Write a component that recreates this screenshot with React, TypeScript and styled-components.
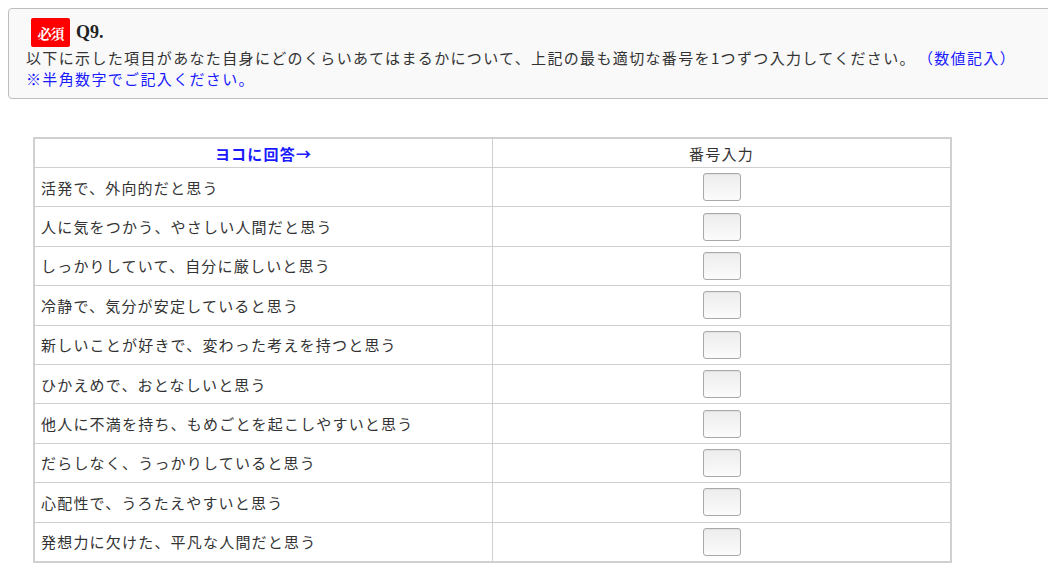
import React from "react";
import styled, { createGlobalStyle } from "styled-components";

const GlobalStyle = createGlobalStyle`
  body {
    margin: 8px;
    background: #fff;
    overflow: hidden;
    font-family: "Noto Sans CJK JP", "Noto Sans", sans-serif;
    color: #333;
    text-spacing-trim: space-all;
  }
`;

const QuestionBox = styled.div`
  width: calc(100% + 40px);
  box-sizing: border-box;
  background: #f9f9f9;
  border: 1px solid #bdbdbd;
  border-radius: 4px;
  padding: 9px 17px 9px 17px;
`;

const TitleRow = styled.div`
  display: flex;
  align-items: center;
  gap: 6px;
  height: 29px;
  margin-left: 5px;
`;

const Badge = styled.span`
  display: inline-flex;
  align-items: center;
  justify-content: center;
  width: 39px;
  height: 29px;
  background: #f00;
  color: #fff;
  border-radius: 2px;
  font-family: "Noto Serif CJK JP", "Noto Sans CJK JP", serif;
  font-weight: 700;
  font-size: 14px;
  letter-spacing: -1px;
`;

const QNum = styled.span`
  font-family: "Liberation Serif", serif;
  font-weight: 700;
  font-size: 18px;
  color: #222;
`;

const Line = styled.div<{ $blue?: boolean }>`
  font-size: 15px;
  letter-spacing: 1.35px;
  line-height: 21px;
  color: ${(p) => (p.$blue ? "#1a1aff" : "#333")};
  white-space: nowrap;
`;

const Blue = styled.span`
  color: #1a1aff;
  margin-left: 2px;
`;

const Grid = styled.table`
  margin: 38px 0 0 25px;
  width: 919px;
  border-collapse: collapse;
  border: 2px solid #d0d0d0;
  font-size: 15px;
  letter-spacing: 1.2px;
`;

const HeadCell = styled.th<{ $blue?: boolean }>`
  height: 28px;
  padding: 0;
  border: 1px solid #cfcfcf;
  text-align: center;
  font-weight: ${(p) => (p.$blue ? 700 : 400)};
  color: ${(p) => (p.$blue ? "#1a1aff" : "#333")};
  width: 50%;
`;

const LabelCell = styled.td`
  border: 1px solid #cfcfcf;
  padding: 0 6px;
  height: 38.4px;
  color: #333;
`;

const InputCell = styled.td`
  border: 1px solid #cfcfcf;
  text-align: center;
  vertical-align: middle;
  padding: 0;
`;

const NumInput = styled.input`
  display: block;
  margin: 0 auto;
  width: 38px;
  height: 28px;
  box-sizing: border-box;
  border: 1px solid #a9a9a9;
  border-radius: 3px;
  background: linear-gradient(#ededed, #fbfbfb);
  box-shadow: inset 0 1px 1px rgba(0, 0, 0, 0.05);
`;

const items = [
  "活発で、外向的だと思う",
  "人に気をつかう、やさしい人間だと思う",
  "しっかりしていて、自分に厳しいと思う",
  "冷静で、気分が安定していると思う",
  "新しいことが好きで、変わった考えを持つと思う",
  "ひかえめで、おとなしいと思う",
  "他人に不満を持ち、もめごとを起こしやすいと思う",
  "だらしなく、うっかりしていると思う",
  "心配性で、うろたえやすいと思う",
  "発想力に欠けた、平凡な人間だと思う",
];

export default function App() {
  return (
    <>
      <GlobalStyle />
      <QuestionBox>
        <TitleRow>
          <Badge>必須</Badge>
          <QNum>Q9.</QNum>
        </TitleRow>
        <Line>
          以下に示した項目があなた自身にどのくらいあてはまるかについて、上記の最も適切な番号を1つずつ入力してください。
          <Blue>（数値記入）</Blue>
        </Line>
        <Line $blue>※半角数字でご記入ください。</Line>
      </QuestionBox>
      <Grid>
        <thead>
          <tr>
            <HeadCell $blue>ヨコに回答→</HeadCell>
            <HeadCell>番号入力</HeadCell>
          </tr>
        </thead>
        <tbody>
          {items.map((t) => (
            <tr key={t}>
              <LabelCell>{t}</LabelCell>
              <InputCell>
                <NumInput type="text" />
              </InputCell>
            </tr>
          ))}
        </tbody>
      </Grid>
    </>
  );
}
